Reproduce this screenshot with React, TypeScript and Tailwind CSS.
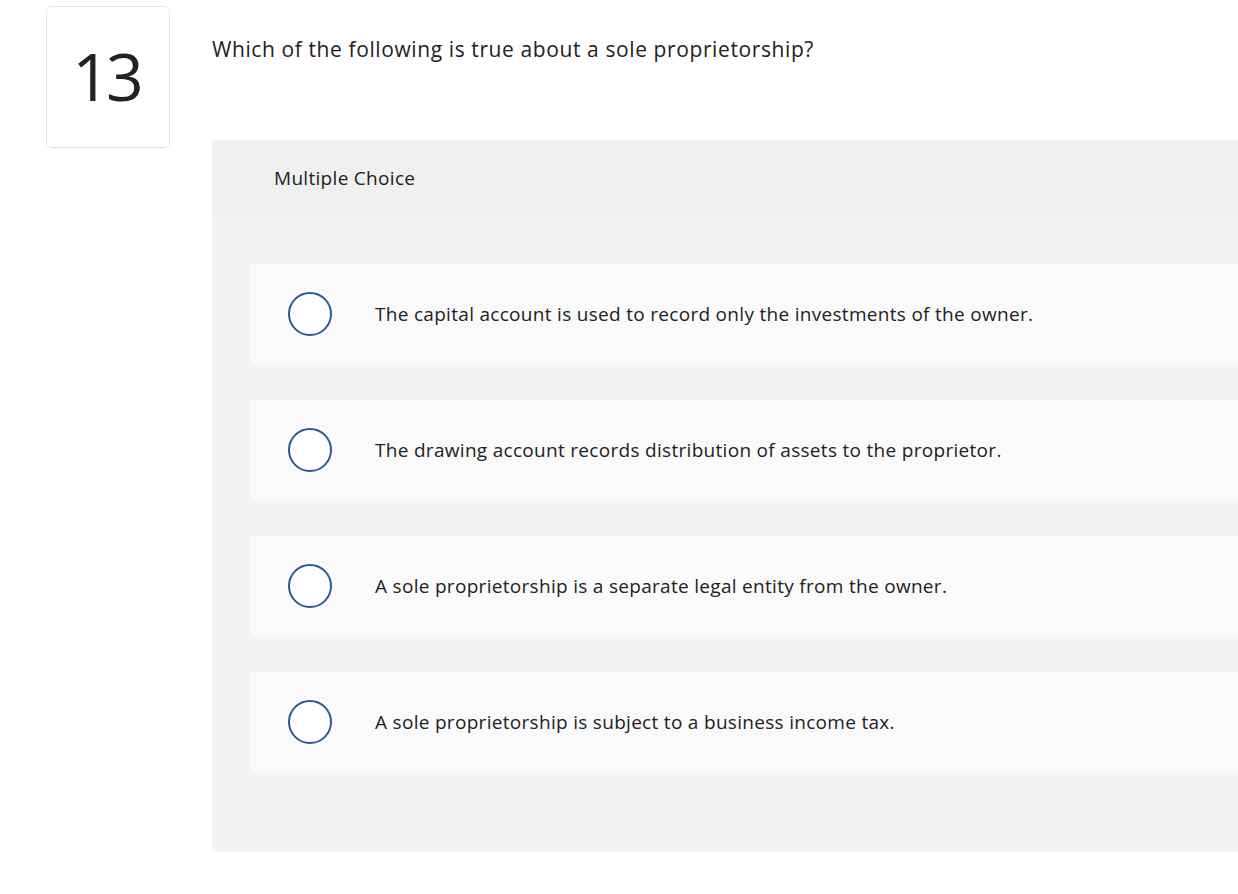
import React from 'react';

const choices = [
  'The capital account is used to record only the investments of the owner.',
  'The drawing account records distribution of assets to the proprietor.',
  'A sole proprietorship is a separate legal entity from the owner.',
  'A sole proprietorship is subject to a business income tax.',
];

const font = { fontFamily: '"Open Sans", "Lato", sans-serif' };

export default function App() {
  return (
    <div className="w-full h-[894px] bg-white overflow-hidden text-[#222]" style={font}>
      <div className="flex">
        <div className="ml-[46px] mt-[6px] w-[124px] h-[142px] shrink-0 border border-[#e4e4e4] rounded-[6px] flex items-center justify-center">
          <span className="text-[66px] leading-none font-medium text-[#222] -mt-[4px] tracking-[-4px] pr-[4px]">13</span>
        </div>
        <div className="ml-[42px] flex-1 min-w-0">
          <h2 className="mt-[35px] text-[21px] leading-[28px] tracking-[0.6px] text-[#222]">
            Which of the following is true about a sole proprietorship?
          </h2>
          <div className="mt-[77px] h-[712px] bg-[#f4f4f4] rounded-l-[4px] overflow-hidden">
            <div className="h-[76px] bg-[#f0f0f0] flex items-center pl-[62px] text-[19px] tracking-[0.3px] text-[#222]">
              Multiple Choice
            </div>
            <div className="pt-[48px] pl-[38px] flex flex-col gap-[36px]">
              {choices.map((c) => (
                <label
                  key={c}
                  className="h-[100px] bg-[#fafafa] rounded-l-[4px] flex items-center cursor-pointer"
                >
                  <span className="ml-[38px] w-[44px] h-[44px] shrink-0 rounded-full border-2 border-[#2b5a8e] bg-white" />
                  <span className="ml-[43px] text-[19px] tracking-[0.3px] text-[#222]">{c}</span>
                </label>
              ))}
            </div>
          </div>
        </div>
      </div>
    </div>
  );
}
